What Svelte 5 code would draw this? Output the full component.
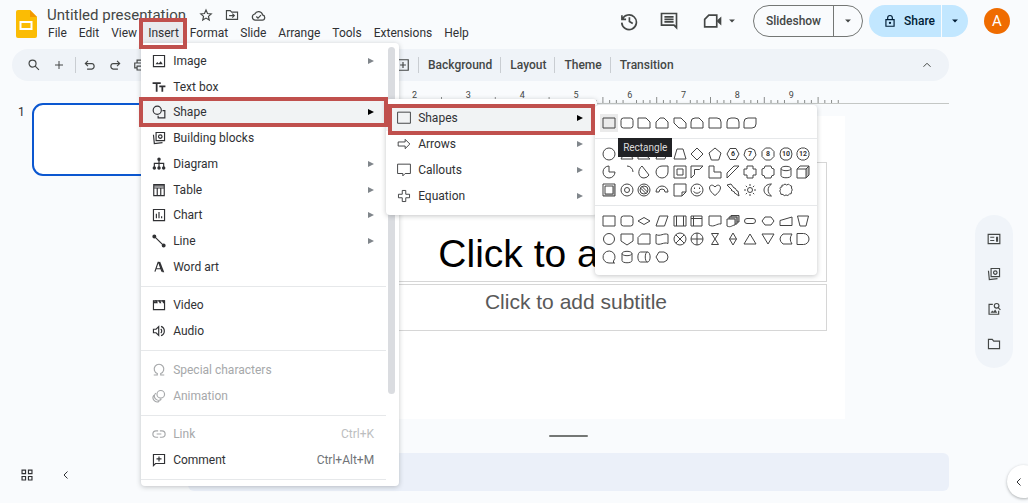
<script lang="ts">
  interface Icon {
    stroke?: string;
    fill?: string;
  }

  interface MenuEntry {
    label: string;
    icon: string;
    arrow?: boolean;
    keys?: string;
    disabled?: boolean;
  }

  interface Shape {
    name: string;
    d: string;
    text?: string;
    shade?: string;
  }

  // 24 unit grid
  const icons: Record<string, Icon> = {
    star: { stroke: "M12 3.5l2.6 5.9 6.4.6-4.8 4.3 1.4 6.3-5.6-3.3-5.6 3.3 1.4-6.3L3 10l6.4-.6z" },
    move: { stroke: "M2.5 19.5v-15h6.5l2.5 2.5h10v12.500zM7 13h8M12.500 9.500l3.500 3.500-3.500 3.500" },
    cloud: { stroke: "M7 19.500a5 5 0 0 1-.8-9.900 6.500 6.500 0 0 1 12.300 1.400 4.300 4.300 0 0 1-.5 8.500zM8.500 13.500l2.700 2.700 4.800-4.900" },
    history: { stroke: "M3.500 5v5h5M4 10a8.800 8.800 0 1 1-.7 4M12.500 7.500v5l4 2.500" },
    comment: { stroke: "M3 3h18v17l-3-3H3zM6.500 7h11M6.500 10h11M6.500 13h11" },
    video: { stroke: "M7 5h9.500v14H2V10z", fill: "M17 11l5-4.500v11L17 13z" },
    caret: { fill: "M5 8.500h14l-7 7z" },
    lock: { stroke: "M5 9.500h14V21H5zM8 9.500V6.500a4 4 0 0 1 8 0v3", fill: "M12 13.200a2 2 0 1 1 0 4 2 2 0 0 1 0-4z" },
    search: { stroke: "M9.500 3.500a6 6 0 1 1 0 12 6 6 0 0 1 0-12zM14 14l6.500 6.500" },
    plus: { stroke: "M12 4v16M4 12h16" },
    undo: { stroke: "M8.500 5L4 9.500 8.500 14M4.500 9.500H15a4.800 4.800 0 0 1 0 9.500H7" },
    redo: { stroke: "M15.500 5L20 9.500 15.500 14M19.500 9.500H9A4.800 4.800 0 0 0 9 19h8" },
    print: { stroke: "M7 8V3.500h10V8M7 17H3V8.500h18V17h-4M7 14h10v6.500H7z" },
    addBox: { stroke: "M3 3h18v18H3zM12 7v10M7 12h10" },
    up: { stroke: "M5 15.500l7-7 7 7" },
    left: { stroke: "M15 5l-7 7 7 7" },
    grid: { stroke: "M3.500 3.500h6v6h-6zM14.500 3.500h6v6h-6zM3.500 14.500h6v6h-6zM14.500 14.500h6v6h-6z" },
    image: { stroke: "M2.500 2.500h19v19h-19z", fill: "M6 17.500l3-4 2.500 2.800 3.500-4 3.500 5.200z" },
    text: { fill: "M1 4h14v3H9.500v13h-3V7H1zM12.500 9.500H23v3h-3.800V20h-3v-7.500h-3.700z" },
    shape: { stroke: "M9 2a7 7 0 1 1 0 14A7 7 0 0 1 9 2zM18 9.500h4V22H10.500v-3.500" },
    blocks: { stroke: "M7 2.500h14.500v14H7zM14.200 6.500a3 3 0 1 1 0 6 3 3 0 0 1 0-6zM2.500 6.500l1.500 15 14-1.500" },
    diagram: { stroke: "M12 4v13M4 17v-6h16v6", fill: "M12 1a3 3 0 1 1 0 6 3 3 0 0 1 0-6zM4 16a3 3 0 1 1 0 6 3 3 0 0 1 0-6zM12 16a3 3 0 1 1 0 6 3 3 0 0 1 0-6zM20 16a3 3 0 1 1 0 6 3 3 0 0 1 0-6z" },
    table: { stroke: "M3 2.500h18v19H3zM3 8.500h18M9 8.500v13M15 8.500v13M3 5h18" },
    chart: { stroke: "M2.500 2.500h19v19h-19zM7.500 10v7.500M12 7v10.500M16.500 14v3.500" },
    line: { stroke: "M4 4l16 16", fill: "M4 .8a3.400 3.400 0 1 1 0 6.800 3.400 3.400 0 0 1 0-6.800zM20 16.400a3.400 3.400 0 1 1 0 6.800 3.400 3.400 0 0 1 0-6.800z" },
    wordArt: { stroke: "M5 20l5.500-16h1L17 20M7 15h8.500", fill: "M14 3l7 18h-3L11 4z" },
    clip: { stroke: "M2.500 5h19v15h-19z", fill: "M2 4h3l2 5h3L8 4h3l2 5h3l-2-5h3l2 5h3V4M2 4v5h6z" },
    audio: { stroke: "M2.500 9v6H7l4.500 4.500v-15L7 9zM15 8.500a4.500 4.500 0 0 1 0 7M15.500 4a8.500 8.500 0 0 1 0 16" },
    omega: { stroke: "M3 20.500h6v-2.500a8.200 8.200 0 1 1 6 0v2.500h6" },
    animation: { stroke: "M15 2.500a6.500 6.500 0 1 1 0 13 6.500 6.500 0 0 1 0-13zM6.500 7a7 7 0 0 0 9.500 10.500M3.500 10.500a7 7 0 0 0 9 10.500" },
    link: { stroke: "M10.500 6.500H7a5.500 5.500 0 0 0 0 11h3.500M13.500 6.500H17a5.500 5.500 0 0 1 0 11h-3.500M8 12h8" },
    addComment: { stroke: "M2.500 2.500h19v15.500H6l-3.500 3.500zM12 6v8.500M7.700 10.200h8.600" },
    rect: { stroke: "M1 2h22v19H1z" },
    arrow: { stroke: "M2 8.500h12V4l8 8-8 8v-4.500H2z" },
    callout: { stroke: "M1 2h22v16H14l-4 4v-4H1z" },
    equation: { stroke: "M9 2.500h6V9h6.500v6H15v6.500H9V15H2.500V9H9z" },
    news: { stroke: "M2 4h20v16H2zM5.500 9h7M5.500 14.500h7M16.500 8v8.500M18 8v8.500" },
    imageSearch: { stroke: "M10 4H3.500v17H20v-6M16.500 2.500a4 4 0 1 1 0 8 4 4 0 0 1 0-8zM19.500 10l3.500 3.500", fill: "M6 18.500l3-4 2 2 3-3.500 3.500 5.500z" },
    folder: { stroke: "M2.500 20V4h6.500l2.500 3h10v13z" },
  };

  const insertGroups: MenuEntry[][] = [
    [
      { label: "Image", icon: "image", arrow: true },
      { label: "Text box", icon: "text" },
      { label: "Shape", icon: "shape", arrow: true },
      { label: "Building blocks", icon: "blocks" },
      { label: "Diagram", icon: "diagram", arrow: true },
      { label: "Table", icon: "table", arrow: true },
      { label: "Chart", icon: "chart", arrow: true },
      { label: "Line", icon: "line", arrow: true },
      { label: "Word art", icon: "wordArt" },
    ],
    [
      { label: "Video", icon: "clip" },
      { label: "Audio", icon: "audio" },
    ],
    [
      { label: "Special characters", icon: "omega", disabled: true },
      { label: "Animation", icon: "animation", disabled: true },
    ],
    [
      { label: "Link", icon: "link", keys: "Ctrl+K", disabled: true },
      { label: "Comment", icon: "addComment", keys: "Ctrl+Alt+M" },
    ],
  ];

  const shapeMenu: MenuEntry[] = [
    { label: "Shapes", icon: "rect", arrow: true },
    { label: "Arrows", icon: "arrow", arrow: true },
    { label: "Callouts", icon: "callout", arrow: true },
    { label: "Equation", icon: "equation", arrow: true },
  ];

  // 14 unit grid
  const circle = "M7 1a6 6 0 1 1 0 12A6 6 0 0 1 7 1z";
  const shapeGroups: Shape[][] = [
    [
      { name: "Rectangle", d: "M1 2h12v10H1z" },
      { name: "Rounded rectangle", d: "M3.500 2h7Q13 2 13 4.500v5Q13 12 10.500 12h-7Q1 12 1 9.500v-5Q1 2 3.500 2z" },
      { name: "Snip single corner", d: "M1 2h8l4 4v6H1z" },
      { name: "Snip same side corners", d: "M1 6l4-4h4l4 4v6H1z" },
      { name: "Snip diagonal corners", d: "M1 2h7l5 5v5H6L1 7z" },
      { name: "Snip and round corner", d: "M1 12V6q0-4 4-4h4l4 4v6z" },
      { name: "Round single corner", d: "M1 2h8q4 0 4 4v6H1z" },
      { name: "Round same side corners", d: "M1 12V6q0-4 4-4h4q4 0 4 4v6z" },
      { name: "Round diagonal corners", d: "M5 2h8v6q0 4-4 4H1V6q0-4 4-4z" },
    ],
    [
      { name: "Oval", d: circle },
      { name: "Triangle", d: "M7 1l6 11H1z" },
      { name: "Right triangle", d: "M1 1v11h12z" },
      { name: "Parallelogram", d: "M4 2h9l-3 10H1z" },
      { name: "Trapezoid", d: "M4 2h6l3 10H1z" },
      { name: "Diamond", d: "M7 1l6 6-6 6-6-6z" },
      { name: "Pentagon", d: "M7 1l6 5-2.300 7H3.300L1 6z" },
      { name: "Hexagon", d: "M4 1.500h6l3 5.500-3 5.500H4L1 7z", text: "6" },
      { name: "Heptagon", d: "M7 1l4.500 2L13 8l-3.500 5h-5L1 8l1.500-5z", text: "7" },
      { name: "Octagon", d: "M4.500 1h5L13 4.500v5L9.500 13h-5L1 9.500v-5z", text: "8" },
      { name: "Decagon", d: "M5 1h4l3 2 1 4-1 4-3 2H5l-3-2-1-4 1-4z", text: "10" },
      { name: "Dodecagon", d: "M5.500 1h3l3 1.500L13 5.500v3l-1.500 3-3 1.500h-3l-3-1.500L1 8.500v-3l1.500-3z", text: "12" },
      { name: "Pie", d: "M7 1a6 6 0 1 0 6 6H7z" },
      { name: "Arc", d: "M7 1a6 6 0 0 1 6 6" },
      { name: "Chord", d: "M5 1l7 9a6 6 0 0 1-5 3C1 13 0 5 5 1z" },
      { name: "Teardrop", d: "M7 1h6v6a6 6 0 1 1-6-6z" },
      { name: "Frame", d: "M1 1h12v12H1zM4 4h6v6H4z" },
      { name: "Half frame", d: "M1 1h12L9.500 4.500h-5v5L1 13z" },
      { name: "L-Shape", d: "M1 1h5v6h7v6H1z" },
      { name: "Diagonal stripe", d: "M1 8l7-7h5L1 13z" },
      { name: "Cross", d: "M4 1h6v3h3v6h-3v3H4v-3H1V4h3z" },
      { name: "Plaque", d: "M4 1h6q0 3 3 3v6q-3 0-3 3H4q0-3-3-3V4q3 0 3-3z" },
      { name: "Can", d: "M2 3.500v7c0 3 10 3 10 0v-7M7 1.300c6.500 0 6.500 4.400 0 4.400s-6.500-4.400 0-4.400z" },
      { name: "Cube", d: "M1 4l3-3h9v9l-3 3H1zM1 4h9v9M10 4l3-3", shade: "M10 4l3-3v9l-3 3z" },
      { name: "Bevel", d: "M1 1h12v12H1zM3 3h8v8H3z", shade: "M1 13l2-2h8V3l2-2v12z" },
      { name: "Donut", d: circle + "M7 4.500a2.500 2.500 0 1 1 0 5 2.500 2.500 0 0 1 0-5z" },
      { name: "No symbol", d: circle + "M7 3a4 4 0 1 1 0 8 4 4 0 0 1 0-8zM3.500 5l5.500 5.500M5 3.500l5.500 5.500" },
      { name: "Block arc", d: "M1 9a6 6 0 0 1 12 0h-3a3 3 0 0 0-6 0z" },
      { name: "Folded corner", d: "M1 1h12v8l-4 4H1zM9 13V9h4" },
      { name: "Smiley", d: circle + "M4.500 4.500v1.500M9.500 4.500v1.500M3.500 8.500q3.500 3.500 7 0" },
      { name: "Heart", d: "M7 12.500C-3 5 3-1 7 4c4-5 10 1 0 8.500z" },
      { name: "Lightning", d: "M1 2l4-1 3 4 1 0 2 3h1l1 5-5-3.500h1L5 7h1z" },
      { name: "Sun", d: "M7 4.500a2.500 2.500 0 1 1 0 5 2.500 2.500 0 0 1 0-5zM7 1v2M7 11v2M1 7h2M11 7h2M2.800 2.800l1.300 1.300M9.900 9.900l1.300 1.300M2.800 11.200l1.300-1.300M9.900 4.100l1.300-1.300" },
      { name: "Moon", d: "M10.500 1C.5 1 .5 13 10.500 13 6 10 6 4 10.500 1z" },
      { name: "Cloud", d: "M3 4q-1-2.500 1.500-2Q6 0 7.500 2 10 0 11 2.500q2.500 0 1.500 2.500 1.500 2 0 3.500.5 3-2 2.500Q9 13.500 7 12q-2 1.500-3-.5Q1 12 1.500 9.500 0 8 1.500 6.500 0 4 3 4z" },
    ],
    [
      { name: "Process", d: "M1 2h12v10H1z" },
      { name: "Alternate process", d: "M3.500 2h7Q13 2 13 4.500v5Q13 12 10.500 12h-7Q1 12 1 9.500v-5Q1 2 3.500 2z" },
      { name: "Decision", d: "M7 3.500l6 3.500-6 3.500L1 7z" },
      { name: "Data", d: "M4.500 2H13L9.500 12H1z" },
      { name: "Predefined process", d: "M1 2h12v10H1zM3.500 2v10M10.500 2v10" },
      { name: "Internal storage", d: "M1 2h11v10H1zM3.500 2v10M1 4.500h11" },
      { name: "Document", d: "M1 2h12v8c-4-1-7 4-12 1z" },
      { name: "Multidocument", d: "M1 5h8v6c-3 0-4 3-8 1zM3 5V3h8v7H9M5 3V1.500h8V8h-2", shade: "M3 3l2-1.500h8V8l-4 3V5H3z" },
      { name: "Terminator", d: "M4 4.500h6a2.500 2.500 0 0 1 0 5H4a2.500 2.500 0 0 1 0-5z" },
      { name: "Preparation", d: "M4 3h6l3 4-3 4H4L1 7z" },
      { name: "Manual input", d: "M1 6.500L13 3v8.500H1z" },
      { name: "Manual operation", d: "M1.500 2h11l-2.500 10H4z" },
      { name: "Connector", d: "M7 1.500a5.500 5.500 0 1 1 0 11 5.500 5.500 0 0 1 0-11z" },
      { name: "Off-page connector", d: "M1 2h12v7l-6 4-6-4z" },
      { name: "Card", d: "M4.500 2H13v10H1V5.500z" },
      { name: "Punched tape", d: "M1 2.500c4 2.500 8-2 12 0v9c-4-2-8 2.500-12 0z" },
      { name: "Summing junction", d: circle + "M2.800 2.800l8.400 8.400M11.200 2.800l-8.400 8.400" },
      { name: "Or", d: circle + "M7 1v12M1 7h12" },
      { name: "Collate", d: "M3.500 1.500h7l-7 11h7z" },
      { name: "Sort", d: "M7 1l3.500 6L7 13 3.500 7zM3.500 7h7" },
      { name: "Extract", d: "M7 2l6 10H1z" },
      { name: "Merge", d: "M1 2h12L7 12z" },
      { name: "Stored data", d: "M4 2h9q-3.500 5 0 10H4q-6-5 0-10z" },
      { name: "Delay", d: "M1 1.500h6.500a5.500 5.500 0 0 1 0 11H1z" },
      { name: "Sequential access", d: "M7 13a6 6 0 1 1 4.500-2v2zM11.500 13H13" },
      { name: "Magnetic disk", d: "M2 3.500v7c0 3 10 3 10 0v-7M7 1.300c6.500 0 6.500 4.400 0 4.400s-6.500-4.400 0-4.400z" },
      { name: "Direct access", d: "M10.500 2h-7C0 2 0 12 3.500 12h7M10.500 2C14 2 14 12 10.500 12 7.500 12 7.500 2 10.500 2z" },
      { name: "Display", d: "M1 7l3-5h5q4 1 4 5t-4 5H4z" },
    ],
  ];

  const menusBefore = ["File", "Edit", "View"];
  const menusAfter = ["Format", "Slide", "Arrange", "Tools", "Extensions", "Help"];
  const toolButtons = ["Background", "Layout", "Theme", "Transition"];
  const ticks = Array.from({ length: 80 }, (_, i) => i + 1).filter((i) => i % 8 !== 0);
  const inches = [1, 2, 3, 4, 5, 6, 7, 8, 9];
</script>

{#snippet icon(name: string, size = 14)}
  <svg class="icon" width={size} height={size} viewBox="0 0 24 24" aria-hidden="true">
    {#if icons[name].stroke}<path class="stroke" d={icons[name].stroke} />{/if}
    {#if icons[name].fill}<path class="solid" d={icons[name].fill} />{/if}
  </svg>
{/snippet}

{#snippet row(entry: MenuEntry, active = false)}
  <button class="menu-row" class:active disabled={entry.disabled}>
    {@render icon(entry.icon)}
    <span class="menu-label">{entry.label}</span>
    {#if entry.keys}<span class="keys">{entry.keys}</span>{/if}
    {#if entry.arrow}
      <svg class="arrow" width="6" height="6" viewBox="0 0 6 6" aria-hidden="true"><path d="M0 0l6 3-6 3z" /></svg>
    {/if}
  </button>
{/snippet}

<div class="page">
  <header>
    <svg class="logo" width="22" height="28" viewBox="0 0 22 28" aria-hidden="true">
      <path d="M2 0h12l7 7v19a2 2 0 0 1-2 2H2a2 2 0 0 1-2-2V2a2 2 0 0 1 2-2z" fill="#fbbc04" />
      <path d="M14 0l7 7h-7z" fill="#f29900" />
      <path d="M4.500 12h11v7h-11z" fill="none" stroke="#fff" stroke-width="2" />
    </svg>

    <div class="heading">
      <div class="title-row">
        <h1>Untitled presentation</h1>
        <button aria-label="Star">{@render icon("star")}</button>
        <button aria-label="Move">{@render icon("move")}</button>
        <button aria-label="Document status">{@render icon("cloud", 15)}</button>
      </div>
      <nav class="menubar">
        {#each menusBefore as name}
          <button>{name}</button>
        {/each}
        <div class="open-menu">
          <button class="open">Insert</button>
          <div class="dropdown insert-menu">
            <div class="menu-list">
              {#each insertGroups as group}
                {#each group as entry}
                  {#if entry.label === "Shape"}
                    <div class="has-submenu">
                      {@render row(entry, true)}
                      <div class="highlight"></div>
                      <div class="dropdown shape-menu">
                        {#each shapeMenu as item, i}
                          {#if i === 0}
                            <div class="has-submenu">
                              {@render row(item, true)}
                              <div class="dropdown palette">
                                {#each shapeGroups as shapes}
                                  <div class="shape-grid">
                                    {#each shapes as shape}
                                      <button class:hovered={shape.name === "Rectangle"} aria-label={shape.name}>
                                        <svg width="14" height="14" viewBox="0 0 14 14">
                                          {#if shape.shade}<path class="shade" d={shape.shade} />{/if}
                                          <path d={shape.d} />
                                          {#if shape.text}<text x="7" y="9">{shape.text}</text>{/if}
                                        </svg>
                                      </button>
                                    {/each}
                                  </div>
                                {/each}
                                <div class="tooltip" role="tooltip">Rectangle</div>
                              </div>
                              <div class="highlight"></div>
                            </div>
                          {:else}
                            {@render row(item)}
                          {/if}
                        {/each}
                      </div>
                    </div>
                  {:else}
                    {@render row(entry)}
                  {/if}
                {/each}
                <hr />
              {/each}
            </div>
            <div class="scrollbar"><div class="thumb"></div></div>
          </div>
          <div class="highlight"></div>
        </div>
        {#each menusAfter as name}
          <button>{name}</button>
        {/each}
      </nav>
    </div>

    <div class="actions">
      <button aria-label="Version history">{@render icon("history", 20)}</button>
      <button aria-label="Comments">{@render icon("comment", 20)}</button>
      <button class="meet" aria-label="Meet">{@render icon("video", 20)}{@render icon("caret", 10)}</button>
      <div class="split outlined">
        <button>Slideshow</button>
        <button class="more" aria-label="Slideshow options">{@render icon("caret", 10)}</button>
      </div>
      <div class="split share">
        <button>{@render icon("lock", 14)}Share</button>
        <button class="more" aria-label="Share options">{@render icon("caret", 10)}</button>
      </div>
      <button class="avatar">A</button>
    </div>
  </header>

  <div class="toolbar">
    <div class="tools">
      <button aria-label="Search">{@render icon("search")}</button>
      <button aria-label="New slide">{@render icon("plus", 12)}</button>
      <span class="divider"></span>
      <button aria-label="Undo">{@render icon("undo")}</button>
      <button aria-label="Redo">{@render icon("redo")}</button>
      <button aria-label="Print">{@render icon("print")}</button>
    </div>
    <button aria-label="Add comment">{@render icon("addBox")}</button>
    {#each toolButtons as name}
      <span class="divider"></span>
      <button class="tool-text">{name}</button>
    {/each}
    <button class="collapse" aria-label="Hide the menus">{@render icon("up", 12)}</button>
  </div>

  <main>
    <aside class="filmstrip">
      <div class="film">
        <span>1</span>
        <div class="slide-thumb"></div>
      </div>
      <div class="film-controls">
        <button aria-label="Grid view">{@render icon("grid")}</button>
        <button aria-label="Hide filmstrip">{@render icon("left", 12)}</button>
      </div>
    </aside>

    <section class="editor">
      <div class="ruler">
        <svg viewBox="0 0 538 14" height="14" aria-hidden="true">
          {#each ticks as i}
            <path d="M{i * 6.725} {i % 8 === 4 ? 8 : 11}V14" />
          {/each}
          {#each inches as n}
            <text x={n * 53.8} y="9">{n}</text>
          {/each}
        </svg>
      </div>
      <div class="stage">
        <div class="slide">
          <div class="placeholder title">Click to add title</div>
          <div class="placeholder subtitle">Click to add subtitle</div>
        </div>
      </div>
      <div class="resize"><span></span></div>
      <div class="notes"></div>
    </section>

    <aside class="side">
      <div class="side-pill">
        <button aria-label="Templates">{@render icon("news")}</button>
        <button aria-label="Building blocks">{@render icon("blocks")}</button>
        <button aria-label="Image search">{@render icon("imageSearch")}</button>
        <button aria-label="Files">{@render icon("folder")}</button>
      </div>
    </aside>
  </main>
  <button class="side-toggle" aria-label="Show side panel">{@render icon("left", 12)}</button>
</div>

<style>
  :global(body) {
    background: #f9fbfd;
  }

  .page {
    box-sizing: border-box;
    color: #303134;
    display: flex;
    flex-direction: column;
    font-family: Roboto, "Liberation Sans", sans-serif;
    font-size: 12px;
    min-height: 100vh;
    overflow: hidden;
    position: relative;
  }

  button {
    align-items: center;
    background: none;
    border: 0;
    color: inherit;
    display: flex;
    font: inherit;
    justify-content: center;
    padding: 0;
  }

  .icon {
    display: block;
    flex: none;
  }

  .icon .stroke {
    fill: none;
    stroke: currentColor;
    stroke-width: 2;
  }

  .icon .solid {
    fill: currentColor;
  }

  header {
    display: flex;
    height: 49px;
  }

  .logo {
    flex: none;
    margin: 10px 4px 0 16px;
  }

  .heading {
    padding-top: 6px;
  }

  .title-row {
    align-items: center;
    color: #444746;
    display: flex;
    gap: 12px;
    height: 18px;
    padding-left: 5px;
  }

  h1 {
    font-size: 15px;
    font-weight: 400;
    line-height: 18px;
    margin: 0 1px 0 0;
    white-space: nowrap;
  }

  .menubar {
    display: flex;
    margin-top: -2px;
  }

  .menubar > button,
  .open {
    height: 22px;
    padding: 0 6px;
  }

  .open {
    background: #e9ebee;
    padding: 0 5px;
  }

  .open-menu,
  .has-submenu {
    position: relative;
  }

  .highlight {
    border: 4px solid #c0504d;
    inset: -2px;
    pointer-events: none;
    position: absolute;
    z-index: 5;
  }

  .open-menu > .highlight {
    inset: -4px -3px -5px -4px;
  }

  .dropdown {
    background: #fff;
    border-radius: 4px;
    box-shadow: 0 1px 5px rgba(60, 64, 67, 0.3);
    box-sizing: border-box;
    position: absolute;
    z-index: 3;
  }

  .insert-menu {
    display: flex;
    height: calc(100vh - 60px);
    left: -2px;
    min-height: 420px;
    top: 21px;
    width: 258px;
  }

  .menu-list {
    display: flex;
    flex: 1;
    flex-direction: column;
    padding-top: 5px;
  }

  .menu-list > :global(.menu-row),
  .has-submenu {
    flex: 1;
  }

  .has-submenu {
    display: flex;
  }

  .menu-row {
    gap: 7px;
    justify-content: flex-start;
    min-height: 24px;
    padding: 0 12px 0 11px;
    width: 100%;
  }

  .menu-row.active {
    background: #f1f3f4;
  }

  .menu-row:disabled {
    color: #a6a8aa;
  }

  .menu-label {
    flex: 1;
    text-align: left;
  }

  .keys {
    color: #6f7377;
  }

  .menu-row:disabled .keys {
    color: #bcbec0;
  }

  .arrow {
    fill: #80868b;
  }

  .active .arrow {
    fill: #000;
  }

  hr {
    border: 0;
    border-top: 1px solid #e6e8ea;
    margin: 6px 0;
    width: 100%;
  }

  .scrollbar {
    padding: 4px 4px 0 2px;
    width: 7px;
  }

  .thumb {
    background: #dadce0;
    border-radius: 4px;
    height: 79%;
  }

  .shape-menu {
    display: flex;
    flex-direction: column;
    left: 100%;
    padding: 6px 0;
    top: 0;
    width: 211px;
  }

  .shape-menu :global(.menu-row) {
    height: 26px;
    padding-right: 14px;
  }

  .shape-menu .highlight {
    inset: -1px 2px -4px;
  }

  .shape-menu .icon .stroke {
    stroke-width: 1.5;
  }

  .palette {
    left: calc(100% - 2px);
    padding: 3px 0;
    top: 0;
    width: 222px;
  }

  .shape-grid {
    display: grid;
    grid-auto-rows: 18px;
    grid-template-columns: repeat(12, 1fr);
    padding: 6px 5px;
  }

  .shape-grid + .shape-grid {
    border-top: 1px solid #e6e8ea;
  }

  .hovered {
    background: #ebebeb;
  }

  .shape-grid svg {
    fill: none;
    stroke: #444;
  }

  .shape-grid .shade {
    fill: #bbb;
    stroke: none;
  }

  .shape-grid text {
    fill: #333;
    font-size: 7px;
    font-weight: 700;
    stroke: none;
    text-anchor: middle;
  }

  .tooltip {
    background: #202124;
    color: #dcdcdc;
    font-size: 10px;
    left: 23px;
    line-height: 19px;
    padding: 0 5px;
    position: absolute;
    top: 33px;
  }

  .actions {
    align-items: center;
    color: #444746;
    display: flex;
    height: 32px;
    margin: 5px 18px 0 auto;
  }

  .actions > button {
    margin-right: 20px;
  }

  .actions > .meet {
    gap: 4px;
    margin: 0 16px 0 4px;
  }

  .split {
    border-radius: 16px;
    box-sizing: border-box;
    display: flex;
    font-weight: 500;
    height: 32px;
    margin-right: 6px;
  }

  .split button {
    gap: 7px;
    padding: 0 12px;
  }

  .split .more {
    padding: 0 9px;
  }

  .outlined {
    border: 1px solid #747775;
  }

  .outlined .more {
    border-left: 1px solid #747775;
  }

  .share {
    background: #c2e7ff;
    color: #001d35;
    margin-right: 16px;
  }

  .share button {
    padding: 0 6px 0 14px;
  }

  .share .more {
    border-left: 1px solid #f9fbfd;
    padding: 0 8px;
  }

  .actions > .avatar {
    background: #ef6c00;
    border-radius: 50%;
    color: #fff;
    font-size: 15px;
    height: 26px;
    margin: 0;
    width: 26px;
  }

  .toolbar {
    align-items: center;
    background: #eff3f8;
    border-radius: 16px;
    color: #444746;
    display: flex;
    font-weight: 500;
    height: 32px;
    margin: 0 79px 0 12px;
    padding: 0 16px 0 14px;
  }

  .tools {
    align-items: center;
    display: flex;
    flex: none;
    gap: 10px;
    width: 370px;
  }

  .tools button {
    width: 15px;
  }

  .tools .divider {
    margin: 0 -4px 0 -1px;
  }

  .divider {
    background: #c9cdd2;
    flex: none;
    height: 16px;
    width: 1px;
  }

  .toolbar > .divider {
    margin-left: 8px;
  }

  .tool-text {
    margin-left: 9px;
  }

  .collapse {
    margin-left: auto;
  }

  main {
    display: grid;
    flex: 1;
    grid-template-columns: 188px minmax(0, 1fr) 79px;
  }

  .filmstrip {
    display: flex;
    flex-direction: column;
    justify-content: space-between;
    padding: 22px 20px 21px 18px;
  }

  .film {
    display: flex;
    gap: 7px;
    line-height: 18px;
  }

  .slide-thumb {
    aspect-ratio: 16 / 9;
    background: #fff;
    border: 2px solid #0b57d0;
    border-radius: 11px;
    box-sizing: border-box;
    height: 73px;
  }

  .film-controls {
    display: flex;
    gap: 26px;
    padding-left: 2px;
  }

  .editor {
    display: flex;
    flex-direction: column;
    padding: 8px 0 12px;
  }

  .ruler {
    border-bottom: 1px solid #c4c7c5;
    display: flex;
    justify-content: center;
    padding-left: 15px;
  }

  .ruler svg {
    display: block;
    width: 538px;
  }

  .ruler path {
    stroke: #8a8d8c;
  }

  .ruler text {
    fill: #444746;
    font-size: 9px;
    text-anchor: middle;
  }

  .stage {
    display: flex;
    flex: 1;
    justify-content: center;
    padding: 12px 0 0 15px;
  }

  .slide {
    align-self: flex-start;
    aspect-ratio: 16 / 9;
    background: #fff;
    box-sizing: border-box;
    display: flex;
    flex-direction: column;
    font-family: "Liberation Sans", Arial, sans-serif;
    gap: 2px;
    padding: 46px 18px 0;
    width: 538px;
  }

  .placeholder {
    border: 1px solid #d6d6d6;
    box-sizing: border-box;
    display: flex;
    justify-content: center;
  }

  .title {
    align-items: flex-end;
    color: #000;
    font-size: 39px;
    height: 120px;
    line-height: 44px;
    padding-bottom: 5px;
  }

  .subtitle {
    color: #595959;
    font-size: 21px;
    height: 47px;
    line-height: 24px;
    padding-top: 5px;
  }

  .resize {
    align-items: center;
    display: flex;
    height: 34px;
    justify-content: center;
  }

  .resize span {
    background: #747775;
    border-radius: 1px;
    height: 2px;
    width: 39px;
  }

  .notes {
    background: #ebf0f9;
    border-radius: 6px;
    height: 38px;
  }

  .side {
    align-items: flex-start;
    display: flex;
    justify-content: flex-end;
    padding: 134px 15px 0 0;
  }

  .side-pill {
    align-items: center;
    background: #f0f4f9;
    border-radius: 19px;
    color: #444746;
    display: flex;
    flex-direction: column;
    gap: 21px;
    padding: 17px 12px;
  }

  .side-toggle {
    background: #fff;
    border-radius: 50%;
    bottom: 5px;
    box-shadow: 0 1px 3px rgba(60, 64, 67, 0.4);
    height: 33px;
    padding-right: 10px;
    position: absolute;
    right: -12px;
    width: 33px;
  }
</style>
